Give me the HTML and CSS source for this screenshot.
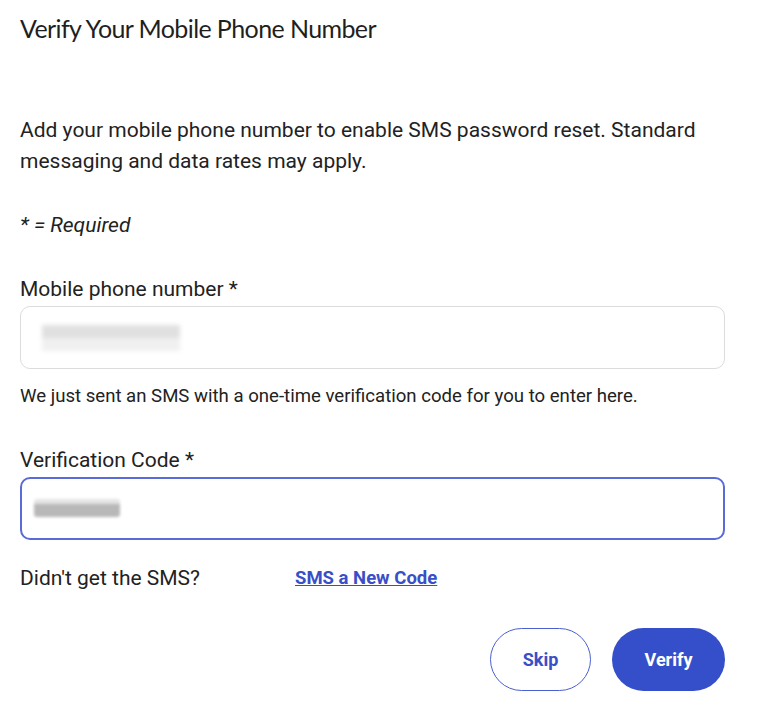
FILE: index.html
```html
<!DOCTYPE html>
<html lang="en">
<head>
<meta charset="utf-8">
<title>Verify Your Mobile Phone Number</title>
<link rel="stylesheet" href="styles.css">
</head>
<body>
<main class="page">
  <h1 class="title">Verify Your Mobile Phone Number</h1>
  <p class="intro">Add your mobile phone number to enable SMS password reset. Standard messaging and data rates may apply.</p>
  <p class="required">* = Required</p>

  <div class="field">
    <label class="label">Mobile phone number *</label>
    <div class="input">
      <span class="blur blur-phone"></span>
    </div>
    <p class="help">We just sent an SMS with a one-time verification code for you to enter here.</p>
  </div>

  <div class="field field-code">
    <label class="label">Verification Code *</label>
    <div class="input input-focus">
      <span class="blur blur-code"></span>
    </div>
  </div>

  <div class="resend">
    <span class="resend-text">Didn't get the SMS?</span>
    <a class="resend-link" href="#">SMS a New Code</a>
  </div>

  <div class="actions">
    <button class="btn btn-outline">Skip</button>
    <button class="btn btn-primary">Verify</button>
  </div>
</main>
</body>
</html>
```

FILE: styles.css
```css
* { box-sizing: border-box; }
html, body { margin: 0; padding: 0; background: #fff; }
body {
  font-family: Roboto, "Liberation Sans", Arial, sans-serif;
  color: #222;
}
.page {
  width: 705px;
  margin-left: 20px;
  padding-top: 12px;
}
.title {
  font-family: Lato, "Liberation Sans", sans-serif;
  font-weight: 400;
  font-size: 25px;
  letter-spacing: -0.6px;
  line-height: 32px;
  margin: 0;
  color: #1f1f1f;
}
.intro {
  margin: 71px 0 0;
  font-size: 21px;
  line-height: 31px;
  color: #222;
}
.required {
  margin: 33px 0 0;
  font-size: 21px;
  font-style: italic;
  line-height: 31px;
}
.field { margin-top: 33px; }
.label {
  display: block;
  font-size: 21px;
  line-height: 31px;
  margin-bottom: 1px;
}
.input {
  height: 63px;
  border: 1px solid #dcdcdc;
  border-radius: 10px;
  display: flex;
  align-items: center;
  padding-left: 21px;
}
.input-focus {
  border: 2px solid #5a6ad8;
  padding-left: 12px;
}
.blur {
  display: block;
  background: #d8d8d8;
  filter: blur(2px);
}
.blur-phone {
  width: 138px;
  height: 26px;
  background: linear-gradient(180deg, #e0e0e0 0 50%, #f0f0f0 50% 100%);
  margin-top: 1px;
}
.blur-code {
  width: 86px;
  height: 18px;
  background: linear-gradient(180deg, #e4e4e4 0 30%, #b8b8b8 30% 100%);
  filter: blur(1.5px);
  border-radius: 3px;
  margin-top: -2px;
}
.help {
  margin: 12px 0 0;
  font-size: 18.6px;
  line-height: 31px;
}
.field-code { margin-top: 33px; }
.resend {
  margin-top: 23px;
  display: flex;
  align-items: center;
  font-size: 21px;
  line-height: 31px;
}
.resend-text { width: 275px; }
.resend-link {
  color: #3a4ec7;
  font-weight: 700;
  font-size: 18.5px;
  text-decoration: underline;
}
.actions {
  margin-top: 34px;
  display: flex;
  justify-content: flex-end;
  gap: 21px;
}
.btn {
  height: 63px;
  border-radius: 32px;
  font-family: Roboto, "Liberation Sans", sans-serif;
  font-size: 18px;
  font-weight: 700;
  cursor: pointer;
}
.btn-outline {
  width: 101px;
  background: #fff;
  color: #3a4ec7;
  border: 1.5px solid #4a5fd0;
}
.btn-primary {
  width: 113px;
  background: #344fc9;
  color: #fff;
  border: none;
}
```
